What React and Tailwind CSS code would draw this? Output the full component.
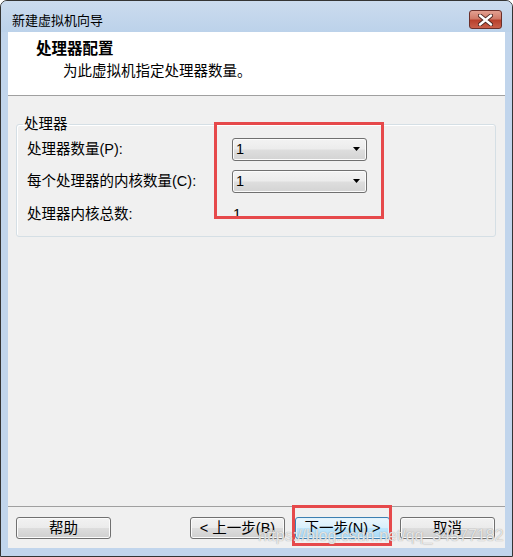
import React from "react";

const font = { fontFamily: '"Liberation Sans", "Noto Sans CJK SC", sans-serif' };

const Combo = ({ value }) => (
  <div className="w-[135px] h-[23px] rounded-[3px] border border-[#707070] bg-[linear-gradient(to_bottom,#f3f3f3_0%,#ececec_48%,#dedede_52%,#d3d3d3_100%)] flex items-center justify-between pl-[3px] pr-[5px] shadow-[inset_0_0_0_1px_#fbfbfb]">
    <span className="leading-none">{value}</span>
    <svg width="8" height="5" viewBox="0 0 8 5">
      <path d="M0 0 H7 L3.5 4 Z" fill="#000" />
    </svg>
  </div>
);

const Btn = ({ children, primary, className = "" }) => (
  <button
    className={
      "w-[95px] h-[22px] rounded-[3px] border flex items-center justify-center leading-none text-[14.5px] text-black " +
      (primary
        ? "border-[#3c7fb1] bg-[linear-gradient(to_bottom,#eaf6fd_0%,#d9f0fc_48%,#bee6fd_52%,#a7d9f5_100%)] shadow-[inset_0_0_0_1px_#e3f3fc] "
        : "border-[#707070] bg-[linear-gradient(to_bottom,#f2f2f2_0%,#ebebeb_48%,#dddddd_52%,#cfcfcf_100%)] shadow-[inset_0_0_0_1px_#fbfbfb] ") +
      className
    }
  >
    {children}
  </button>
);

export default function App() {
  return (
    <div
      style={font}
      className="relative w-[513px] h-[557px] bg-[#c1d5ec] border border-[#343434] rounded-t-[7px] flex flex-col px-[7px] pb-[6px] text-black"
    >
      {/* title bar */}
      <div className="h-[31px] flex justify-between items-start bg-[linear-gradient(to_bottom,#cbdbee,#bcd2ea)] -mx-[7px] px-[7px] rounded-t-[6px]">
        <span className="mt-[11px] pl-[4px] text-[13px] leading-[17px]">新建虚拟机向导</span>
        <div className="mt-[9px] mr-[3px] w-[33px] h-[19px] rounded-[3px] border border-[#6b2f2a] bg-[linear-gradient(to_bottom,#e3a091_0%,#d07a68_45%,#b8402c_55%,#c9604b_100%)] flex items-center justify-center">
          <svg width="15" height="12" viewBox="0 0 15 12">
            <path
              d="M2 1.5 L13 10.5 M13 1.5 L2 10.5"
              stroke="#4b2520"
              strokeWidth="4.2"
              strokeLinecap="round"
            />
            <path
              d="M2 1.5 L13 10.5 M13 1.5 L2 10.5"
              stroke="#fff"
              strokeWidth="2.4"
              strokeLinecap="round"
            />
          </svg>
        </div>
      </div>

      {/* client */}
      <div className="flex-1 flex flex-col bg-[#f0f0f0] mb-[2px]">
        <div className="h-[64px] bg-white border-b border-[#a0a0a0] pl-[28px] pt-[7px]">
          <div className="text-[15.5px] font-bold leading-[20px]">处理器配置</div>
          <div className="pl-[27px] text-[14.5px] leading-[20px] mt-[2px]">为此虚拟机指定处理器数量。</div>
        </div>

        <div className="flex-1 px-[8px] pt-[19px]">
          <fieldset className="border border-[#d5dfe5] rounded-[3px] mr-[1px] pl-[10px] pb-[10px] text-[14.5px] shadow-[inset_1px_1px_0_#ffffff]">
            <legend className="-ml-[4px] px-[1px] leading-[18px]">处理器</legend>
            <div className="grid grid-cols-[205px_135px] gap-y-[9px] items-center pt-[5px]">
              <span>处理器数量(P):</span>
              <Combo value="1" />
              <span>每个处理器的内核数量(C):</span>
              <Combo value="1" />
              <span className="h-[22px] flex items-center mt-[2px]">处理器内核总数:</span>
              <span className="pl-[1px] mt-[2px]">1</span>
            </div>
          </fieldset>
        </div>

        <div className="border-t border-[#a0a0a0] h-[42px] flex items-start justify-between pl-[8px] pr-[10px] pt-[10px]">
          <Btn>帮助</Btn>
          <div className="flex gap-[10px]">
            <Btn>&lt; 上一步(B)</Btn>
            <Btn primary>下一步(N) &gt;</Btn>
            <Btn>取消</Btn>
          </div>
        </div>
      </div>

      {/* annotations */}
      <div className="absolute left-[213px] top-[121px] w-[170px] h-[97px] border-[3px] border-[#e6494b] pointer-events-none" />
      <div className="absolute left-[291px] top-[504px] w-[100px] h-[41px] border-[3px] border-[#e6494b] pointer-events-none" />
      <div className="absolute left-[257px] top-[525px] text-[16px] leading-[20px] text-white/75 [text-shadow:0_0_1px_#8c8c8c] pointer-events-none">
        https://blog.csdn.net/qq_34577182
      </div>
    </div>
  );
}
